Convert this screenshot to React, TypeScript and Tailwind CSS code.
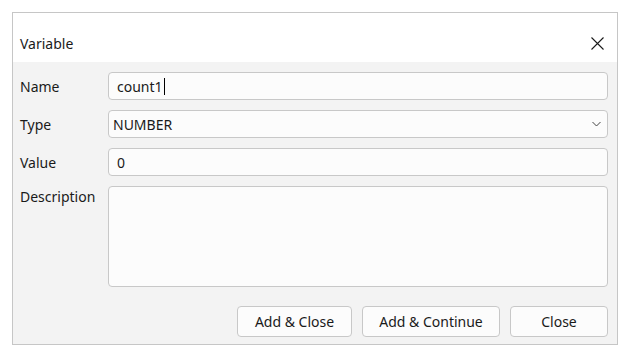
import React from "react";

export default function App() {
  const font = { fontFamily: '"Segoe UI", "Noto Sans", "Open Sans", sans-serif' };
  return (
    <div className="w-[629px] h-[353px] bg-white pt-[12px] pl-[12px]" style={font}>
      <div className="w-[606px] h-[333px] border border-[#c6c6c6] flex flex-col text-[14px] text-[#1a1a1a]">
        <div className="h-[49px] bg-white flex items-end justify-between pb-[8px] pl-[7px] pr-[13px]">
          <span className="leading-[20px]">Variable</span>
          <svg width="13" height="13" viewBox="0 0 13 13" className="mb-[4px]">
            <path d="M0.5 0.5 L12.5 12.5 M12.5 0.5 L0.5 12.5" stroke="#1a1a1a" strokeWidth="1.1" fill="none" />
          </svg>
        </div>
        <div className="flex-1 bg-[#f3f3f3] flex flex-col pl-[7px] pr-[9px] pt-[10px]">
          <div className="flex items-center h-[28px]">
            <span className="w-[88px] pt-[1px]">Name</span>
            <div className="flex-1 h-[28px] rounded-[4px] border border-[#c8c8c8] bg-[#fcfcfc] flex items-center pl-[8px]">
              <span>count1</span>
              <span className="w-[1px] h-[17px] bg-black ml-[1px]" />
            </div>
          </div>
          <div className="flex items-center h-[28px] mt-[10px]">
            <span className="w-[88px] pt-[1px]">Type</span>
            <div className="flex-1 h-[28px] rounded-[4px] border border-[#c8c8c8] bg-[#fcfcfc] flex items-center justify-between pl-[4px] pr-[6px]">
              <span>NUMBER</span>
              <svg width="9" height="6" viewBox="0 0 9 6">
                <path d="M0.5 1 L4.5 5 L8.5 1" stroke="#444" strokeWidth="1" fill="none" />
              </svg>
            </div>
          </div>
          <div className="flex items-center h-[28px] mt-[10px]">
            <span className="w-[88px] pt-[1px]">Value</span>
            <div className="flex-1 h-[28px] rounded-[4px] border border-[#c8c8c8] bg-[#fcfcfc] flex items-center pl-[8px]">
              <span>0</span>
            </div>
          </div>
          <div className="flex items-start mt-[10px]">
            <span className="w-[88px] leading-[20px] mt-[1px]">Description</span>
            <div className="flex-1 h-[101px] rounded-[4px] border border-[#c8c8c8] bg-[#fcfcfc]" />
          </div>
          <div className="flex justify-end gap-[10px] mt-[19px]">
            <button className="w-[115px] h-[31px] rounded-[4px] border border-[#c8c8c8] bg-[#fcfcfc]">Add &amp; Close</button>
            <button className="w-[138px] h-[31px] rounded-[4px] border border-[#c8c8c8] bg-[#fcfcfc]">Add &amp; Continue</button>
            <button className="w-[98px] h-[31px] rounded-[4px] border border-[#c8c8c8] bg-[#fcfcfc]">Close</button>
          </div>
        </div>
      </div>
    </div>
  );
}
